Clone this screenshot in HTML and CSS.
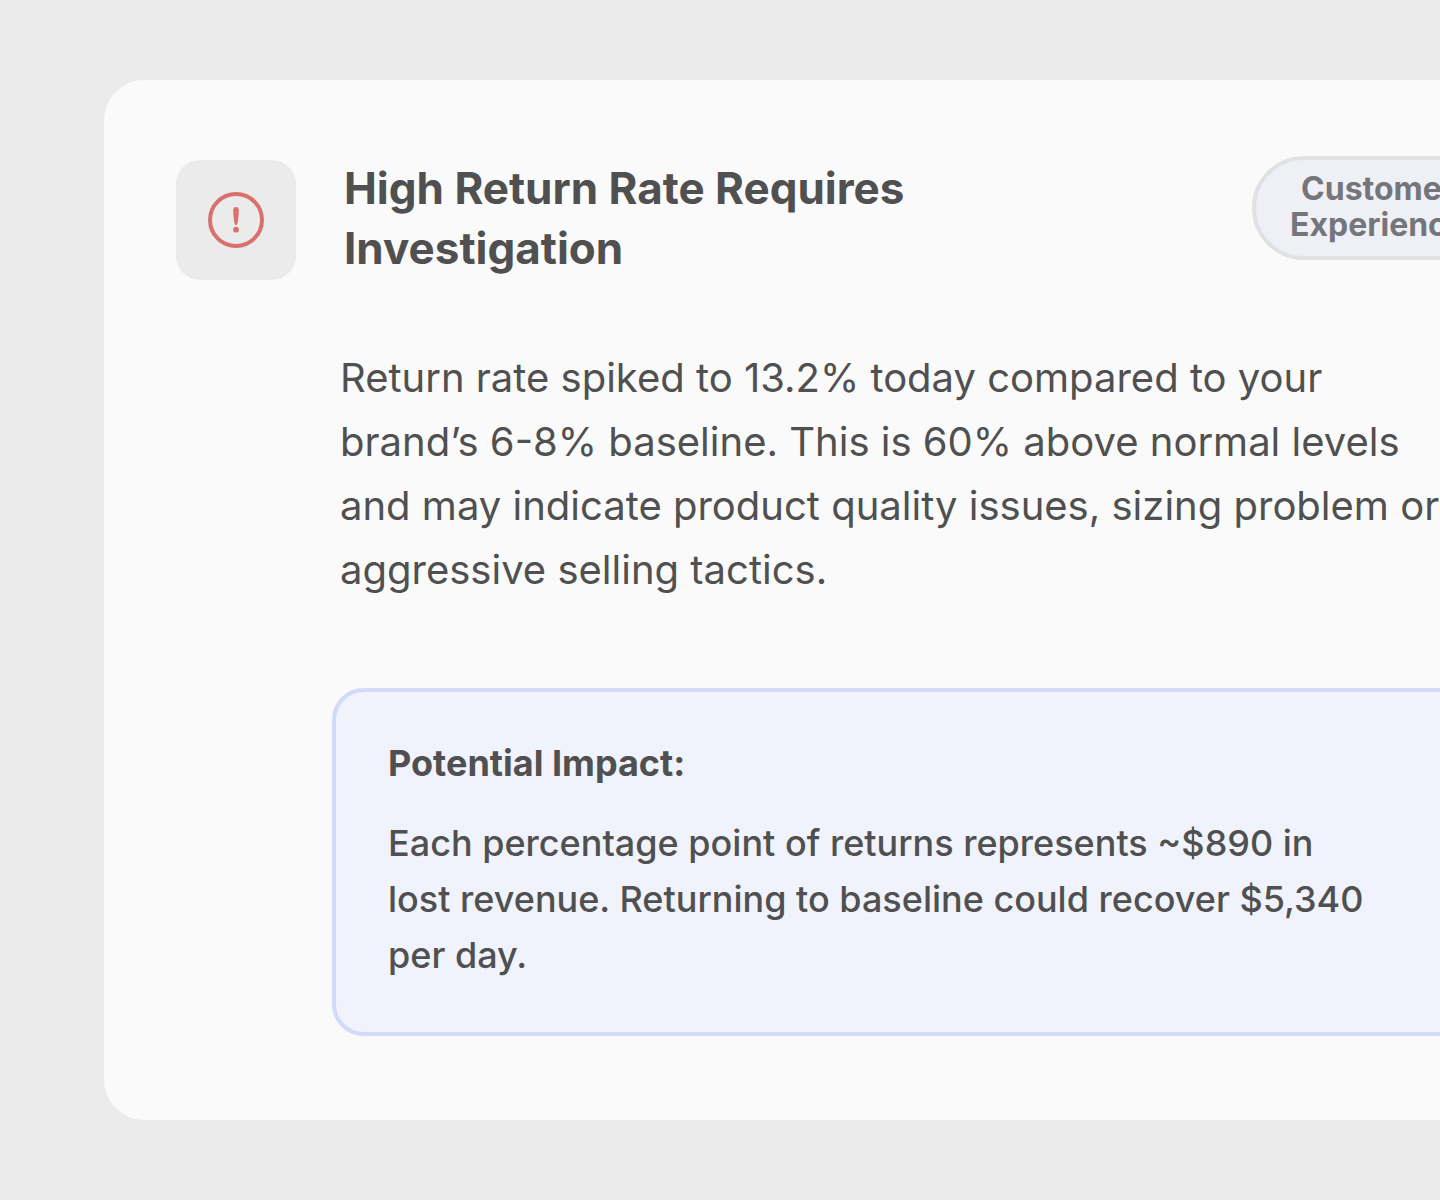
FILE: index.html
```html
<!DOCTYPE html>
<html lang="en">
<head>
    <meta charset="utf-8">
    <title>High Return Rate Requires Investigation</title>
    <link rel="stylesheet" href="styles.css">
</head>
<body>
    <article class="card">
        <header class="card-header">
            <div class="icon-box">
                <svg width="56" height="56" viewBox="0 0 56 56" fill="none" aria-hidden="true">
                    <circle cx="28" cy="28" r="26" stroke="#d8716c" stroke-width="4"/>
                    <path d="M25.2 18c0-2 1-3 2.8-3s2.8 1 2.8 3c0 5-.7 10.5-1.5 14-.3 1.3-2.3 1.3-2.6 0-.8-3.5-1.5-9-1.5-14z" fill="#d8716c"/>
                    <circle cx="28" cy="37.7" r="2.9" fill="#d8716c"/>
                </svg>
            </div>
            <h1 class="title">High Return Rate Requires<br>Investigation</h1>
            <span class="badge">Customer<br>Experience</span>
        </header>
        <p class="description">
            Return rate spiked to 13.2% today compared to your<br>
            brand’s 6-8% baseline. This is 60% above normal levels<br>
            and may indicate product quality issues, sizing problem or<br>
            aggressive selling tactics.
        </p>
        <section class="impact">
            <h2 class="impact-title">Potential Impact:</h2>
            <p class="impact-text">
                Each percentage point of returns represents ~$890 in<br>
                lost revenue. Returning to baseline could recover $5,340<br>
                per day.
            </p>
        </section>
    </article>
</body>
</html>
```

FILE: styles.css
```css
* {
    box-sizing: border-box;
}

body {
    margin: 0;
    padding: 80px 0 80px 104px;
    background-color: #ebebeb;
    color: #505050;
    font-family: Inter, "Liberation Sans", sans-serif;
    overflow: hidden;
}

/* the card runs off the right side of the window */
.card {
    margin-right: -136px;
    padding: 76px 72px 84px;
    background-color: #fafafa;
    border-radius: 40px;
}

.card-header {
    display: flex;
    align-items: flex-start;
}

.icon-box {
    display: flex;
    align-items: center;
    justify-content: center;
    width: 120px;
    height: 120px;
    margin: 4px 48px 0 0;
    background-color: #ebebeb;
    border-radius: 24px;
}

.title {
    flex: 1;
    margin: 2px 0 0;
    font-size: 44px;
    font-weight: 700;
    line-height: 60px;
}

.badge {
    padding: 11px 34px 13px;
    border: 4px solid #dfe1e3;
    border-radius: 52px;
    background-color: #eff0f5;
    color: #75767b;
    font-size: 32px;
    font-weight: 700;
    line-height: 36px;
    text-align: center;
}

.description {
    margin: 66px 0 0 164px;
    font-size: 40px;
    font-weight: 400;
    line-height: 64px;
    white-space: nowrap;
}

.impact {
    margin: 86px 0 0 156px;
    padding: 47px 52px 49px;
    border: 4px solid #d3d9f8;
    border-radius: 32px;
    background-color: #f0f3fb;
}

.impact-title {
    margin: 0 0 28px;
    font-size: 36px;
    font-weight: 700;
    line-height: 48px;
}

.impact-text {
    margin: 0;
    font-size: 36px;
    font-weight: 500;
    line-height: 56px;
    white-space: nowrap;
}
```
